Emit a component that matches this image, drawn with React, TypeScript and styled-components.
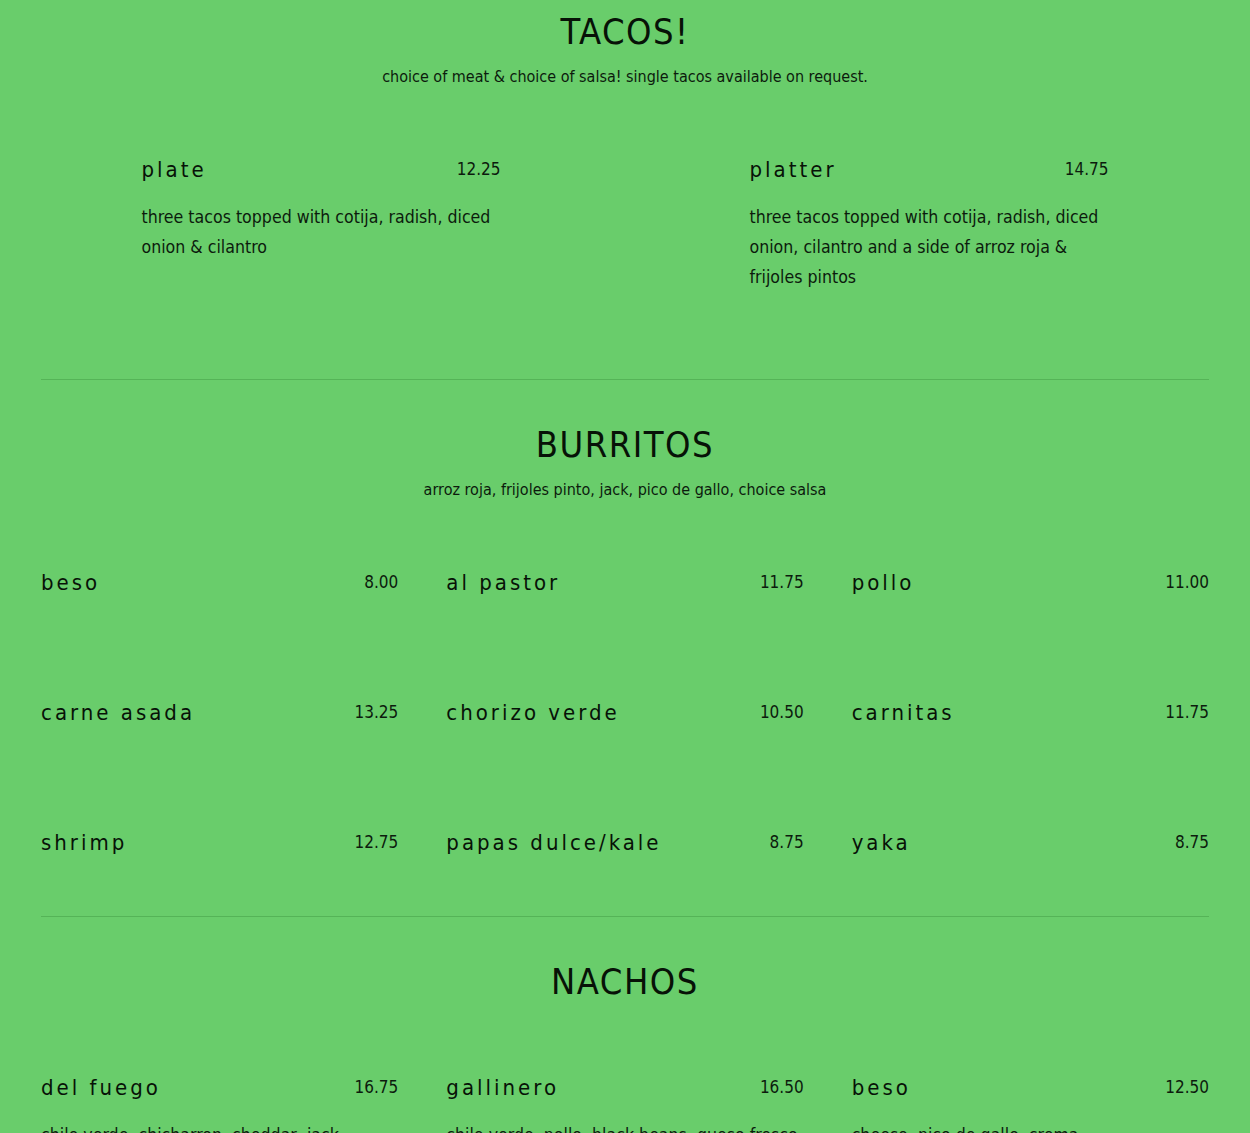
import React from "react";
import styled, { createGlobalStyle } from "styled-components";

const FONT = `"Liberation Sans Narrow", "DejaVu Sans Condensed", "Liberation Sans", sans-serif`;

const GlobalStyle = createGlobalStyle`
  html, body {
    margin: 0;
    padding: 0;
    background: #69cd6b;
  }
  body {
    font-family: ${FONT};
    color: #0c1b0d;
  }
`;

const Page = styled.main`
  max-width: 1168px;
  margin: 0 auto;
  overflow: hidden;
  height: 1133px;
`;

const Section = styled.section<{ $first?: boolean }>`
  padding: ${(p) => (p.$first ? "7px" : "40px")} 0 56px;
  border-bottom: 1px solid #55b457;
  &:last-child {
    border-bottom: none;
  }
`;

const Title = styled.h2`
  margin: 0;
  font-family: ${FONT};
  font-weight: 400;
  font-size: 36px;
  line-height: 50px;
  letter-spacing: 1.5px;
  text-align: center;
  color: #071207;
`;

const Subtitle = styled.p`
  margin: 8px 0 0;
  font-size: 16px;
  line-height: 24px;
  text-align: center;
`;

const Grid = styled.div<{ $cols: number }>`
  display: grid;
  grid-template-columns: repeat(${(p) => p.$cols}, 1fr);
  column-gap: 48px;
  row-gap: 94px;
  margin-top: 62px;
`;

const Item = styled.article<{ $narrow?: boolean }>`
  width: ${(p) => (p.$narrow ? "359px" : "auto")};
  justify-self: ${(p) => (p.$narrow ? "center" : "stretch")};
`;

const ItemHead = styled.div`
  display: flex;
  justify-content: space-between;
  align-items: center;
  height: 36px;
`;

const Name = styled.h3`
  margin: 0;
  font-weight: 400;
  font-size: 22px;
  letter-spacing: 3px;
  color: #071207;
`;

const Price = styled.span`
  font-size: 17px;
`;

const Desc = styled.p`
  margin: 15px 0 31px;
  font-size: 17.6px;
  line-height: 30px;
`;

type MenuItem = { name: string; price: string; desc?: string };

const tacos: MenuItem[] = [
  {
    name: "plate",
    price: "12.25",
    desc: "three tacos topped with cotija, radish, diced onion & cilantro",
  },
  {
    name: "platter",
    price: "14.75",
    desc: "three tacos topped with cotija, radish, diced onion, cilantro and a side of arroz roja & frijoles pintos",
  },
];

const burritos: MenuItem[] = [
  { name: "beso", price: "8.00" },
  { name: "al pastor", price: "11.75" },
  { name: "pollo", price: "11.00" },
  { name: "carne asada", price: "13.25" },
  { name: "chorizo verde", price: "10.50" },
  { name: "carnitas", price: "11.75" },
  { name: "shrimp", price: "12.75" },
  { name: "papas dulce/kale", price: "8.75" },
  { name: "yaka", price: "8.75" },
];

const nachos: MenuItem[] = [
  {
    name: "del fuego",
    price: "16.75",
    desc: "chile verde, chicharron, cheddar, jack, pickled jalapeño",
  },
  {
    name: "gallinero",
    price: "16.50",
    desc: "chile verde, pollo, black beans, queso fresco",
  },
  { name: "beso", price: "12.50", desc: "cheese, pico de gallo, crema" },
];

function Entry({ item, narrow }: { item: MenuItem; narrow?: boolean }) {
  return (
    <Item $narrow={narrow}>
      <ItemHead>
        <Name>{item.name}</Name>
        <Price>{item.price}</Price>
      </ItemHead>
      {item.desc && <Desc>{item.desc}</Desc>}
    </Item>
  );
}

export default function App() {
  return (
    <>
      <GlobalStyle />
      <Page>
        <Section $first>
          <Title>TACOS!</Title>
          <Subtitle>
            choice of meat &amp; choice of salsa! single tacos available on
            request.
          </Subtitle>
          <Grid $cols={2}>
            {tacos.map((t) => (
              <Entry item={t} key={t.name} narrow />
            ))}
          </Grid>
        </Section>
        <Section>
          <Title>BURRITOS</Title>
          <Subtitle>
            arroz roja, frijoles pinto, jack, pico de gallo, choice salsa
          </Subtitle>
          <Grid $cols={3}>
            {burritos.map((b) => (
              <Entry item={b} key={b.name} />
            ))}
          </Grid>
        </Section>
        <Section>
          <Title>NACHOS</Title>
          <Grid $cols={3}>
            {nachos.map((n) => (
              <Entry item={n} key={n.name} />
            ))}
          </Grid>
        </Section>
      </Page>
    </>
  );
}
